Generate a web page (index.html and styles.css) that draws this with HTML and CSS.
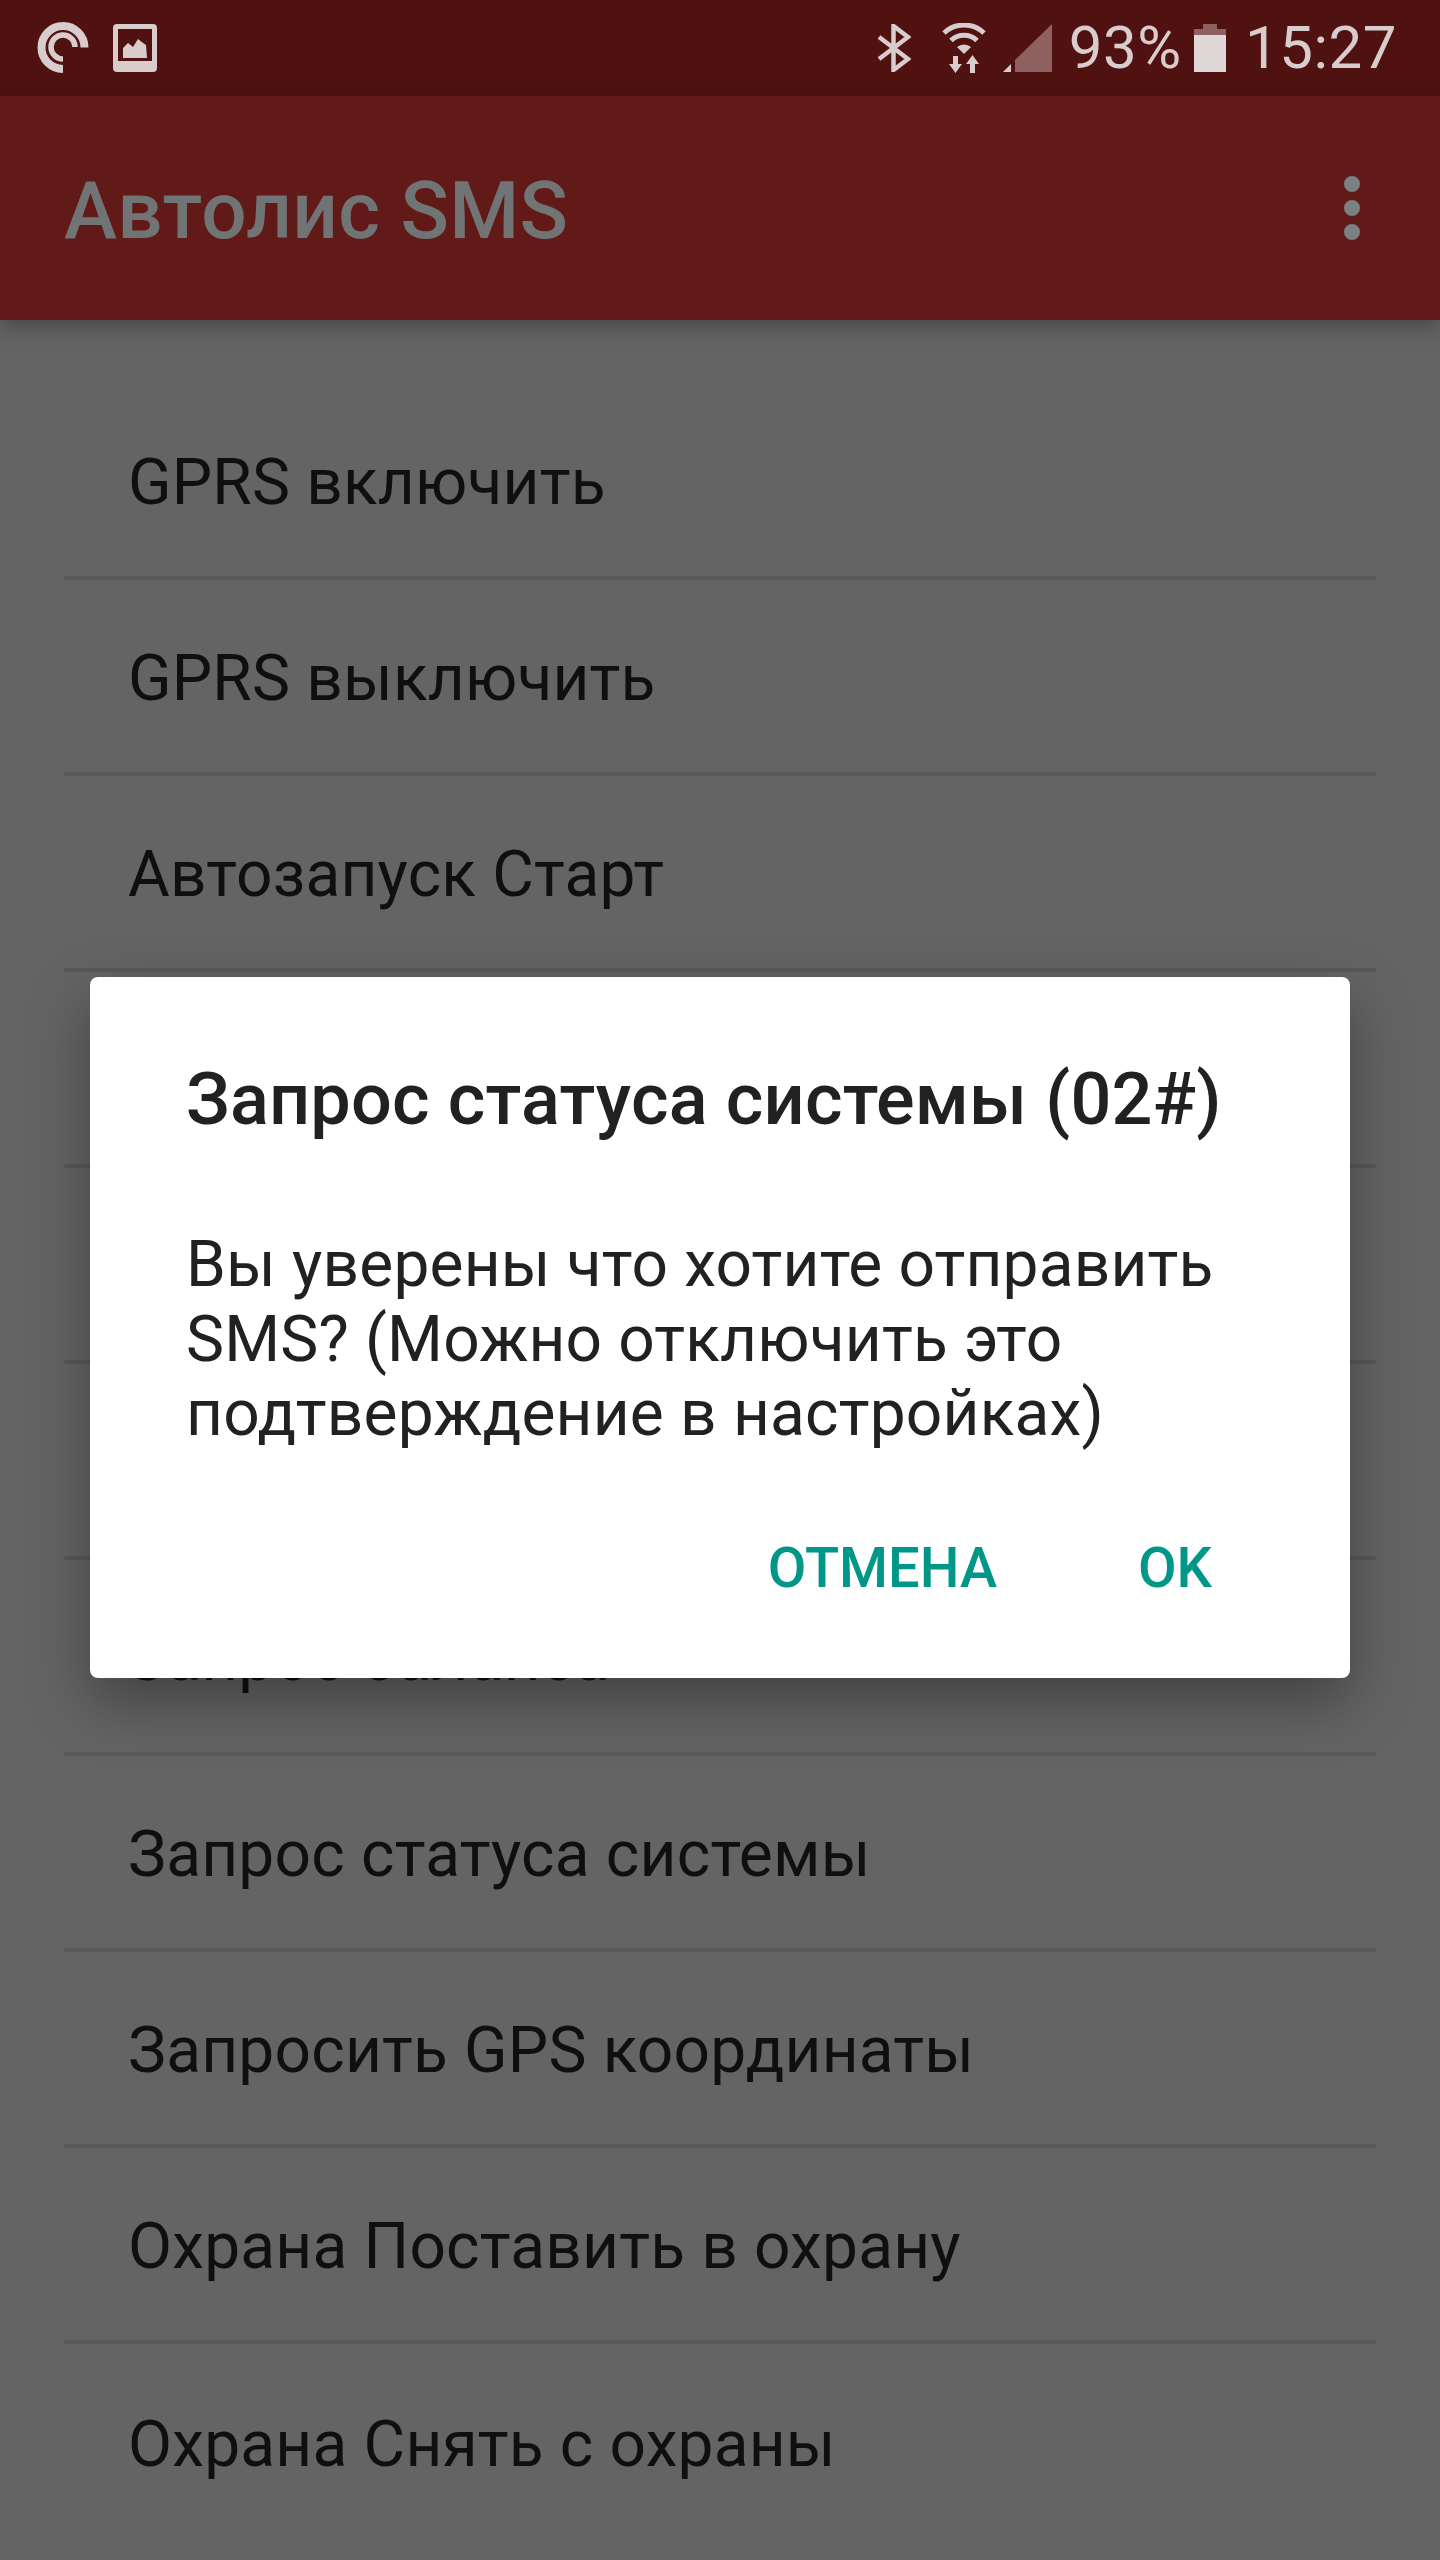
FILE: index.html
```html
<!DOCTYPE html>
<html lang="ru">
<head>
  <meta charset="UTF-8">
  <meta name="viewport" content="width=device-width, initial-scale=1.0">
  <link rel="stylesheet" href="styles.css">
  <title>Автолис SMS</title>
</head>
<body>
  <div class="screen">
    <div class="status-bar">
      <svg class="icon-podcast" width="52" height="52" viewBox="0 0 52 52">
        <path d="M26 47A21.5 21.5 0 1 1 47.5 25.5" fill="none" stroke="#d8cccc" stroke-width="8"/>
        <path d="M26 37A12 12 0 1 1 38 25" fill="none" stroke="#d8cccc" stroke-width="5.5"/>
      </svg>
      <svg class="icon-image" width="44" height="48" viewBox="0 0 44 48">
        <path fill="#d8cccc" fill-rule="evenodd" d="M4 0H40A4 4 0 0 1 44 4V44A4 4 0 0 1 40 48H4A4 4 0 0 1 0 44V4A4 4 0 0 1 4 0ZM5 5V37H39V5Z"/>
        <path fill="#d8cccc" d="M10 34V24L15 19L20 23L25 15L30 19L33 21L34 34Z"/>
      </svg>
      <div class="status-spacer"></div>
      <svg class="icon-bt" width="34" height="48" viewBox="0 0 34 48">
        <path d="M2 13L31 35L16.5 46V2L31 13L2 35" fill="none" stroke="#d8cccc" stroke-width="4.5"/>
      </svg>
      <svg class="icon-wifi" width="44" height="50" viewBox="0 0 44 50">
        <path d="M2 10A29 29 0 0 1 42 10" fill="none" stroke="#d8cccc" stroke-width="5"/>
        <path d="M9 17.500A19 19 0 0 1 35 17.500" fill="none" stroke="#d8cccc" stroke-width="5"/>
        <path fill="#d8cccc" d="M15 24A11 11 0 0 1 29 24L22 31Z"/>
        <path fill="#d8cccc" d="M11 33H16V41H20L13.500 50L7 41H11Z"/>
        <path fill="#d8cccc" d="M28 50H33V41H37L30.500 32L24 41H28Z"/>
      </svg>
      <svg class="icon-signal" width="50" height="48" viewBox="0 0 50 48">
        <path fill="#d8cccc" d="M1 48L9 40V48Z"/>
        <path fill="#8f6060" d="M13 36L50 0V48H13Z"/>
      </svg>
      <span class="status-text battery-text">93%</span>
      <div class="battery">
        <div class="battery-cap"></div>
        <div class="battery-top"></div>
        <div class="battery-body"></div>
      </div>
      <span class="status-text">15:27</span>
    </div>

    <header class="toolbar">
      <h1 class="toolbar-title">Автолис SMS</h1>
      <div class="menu-dots"><i></i><i></i><i></i></div>
    </header>

    <main class="command-list">
      <div class="command">GPRS включить</div>
      <div class="command">GPRS выключить</div>
      <div class="command">Автозапуск Старт</div>
      <div class="command"></div>
      <div class="command"></div>
      <div class="command"></div>
      <div class="command">Запрос баланса</div>
      <div class="command">Запрос статуса системы</div>
      <div class="command">Запросить GPS координаты</div>
      <div class="command">Охрана Поставить в охрану</div>
      <div class="command">Охрана Снять с охраны</div>
    </main>

    <section class="dialog">
      <h2 class="dialog-title">Запрос статуса системы (02#)</h2>
      <p class="dialog-text">Вы уверены что хотите отправить SMS? (Можно отключить это подтверждение в настройках)</p>
      <div class="dialog-buttons">
        <button class="dialog-button">ОТМЕНА</button>
        <button class="dialog-button">OK</button>
      </div>
    </section>
  </div>
</body>
</html>
```

FILE: styles.css
```css
* {
  box-sizing: border-box;
}

body {
  margin: 0;
  font-family: Roboto, sans-serif;
  background-color: #646464;
}

.screen {
  position: relative;
  width: 1440px;
  height: 2560px;
  overflow: hidden;
  background-color: #646464;
}

.status-bar {
  display: flex;
  align-items: center;
  height: 96px;
  padding: 0 43px 0 37px;
  background-color: #501111;
  color: #d8cccc;
}

.icon-image {
  margin-left: 24px;
}

.status-spacer {
  flex: 1;
}

.icon-wifi {
  margin-left: 31px;
}

.icon-signal {
  margin-left: 15.500px;
}

.status-text {
  font-size: 60px;
  letter-spacing: 0.5px;
  line-height: 96px;
}

.battery-text {
  margin-left: 17px;
}

.battery {
  display: flex;
  flex-direction: column;
  align-items: center;
  width: 32px;
  height: 48px;
  margin: 0 19px 0 12.500px;
}

.battery-cap {
  width: 14px;
  height: 5px;
  background-color: #8f6060;
}

.battery-top {
  width: 32px;
  height: 6px;
  background-color: #8f6060;
}

.battery-body {
  flex: 1;
  width: 32px;
  background-color: #e0d8d8;
}

.toolbar {
  position: relative;
  display: flex;
  align-items: center;
  justify-content: space-between;
  height: 224px;
  padding: 6px 80px 0 64px;
  background-color: #611a18;
  box-shadow: 0 6px 20px rgba(0, 0, 0, 0.3);
}

.toolbar-title {
  margin: 0;
  font-size: 80px;
  font-weight: 500;
  letter-spacing: 0.3px;
  color: #707474;
}

.menu-dots {
  display: flex;
  flex-direction: column;
  gap: 8px;
  margin-top: -6px;
}

.menu-dots i {
  display: block;
  width: 16px;
  height: 16px;
  border-radius: 50%;
  background-color: #7b8080;
}

.command-list {
  padding: 64px 64px 0;
}

.command {
  display: flex;
  align-items: center;
  height: 196px;
  padding: 5px 0 0 64px;
  border-bottom: 4px solid #595959;
  font-size: 64px;
  letter-spacing: 0.2px;
  color: #0f0f0f;
}

.command:last-child {
  border-bottom: none;
}

.dialog {
  position: absolute;
  top: 977px;
  left: 90px;
  width: 1260px;
  height: 701px;
  padding: 81px 96px 0;
  border-radius: 8px;
  background-color: #fff;
  box-shadow: 0 24px 60px rgba(0, 0, 0, 0.35);
}

.dialog-title {
  margin: 0;
  font-size: 72px;
  font-weight: 500;
  letter-spacing: 0.2px;
  line-height: 84px;
  color: #212121;
}

.dialog-text {
  margin: 86px 0 0;
  font-size: 64px;
  letter-spacing: 0.2px;
  line-height: 74.500px;
  color: #212121;
}

.dialog-buttons {
  display: flex;
  justify-content: flex-end;
  gap: 141px;
  margin-top: 83px;
  padding-right: 42px;
}

.dialog-button {
  padding: 0;
  border: none;
  background: none;
  font-family: Roboto, sans-serif;
  font-size: 56px;
  font-weight: 500;
  line-height: 66px;
  color: #009688;
}
```
